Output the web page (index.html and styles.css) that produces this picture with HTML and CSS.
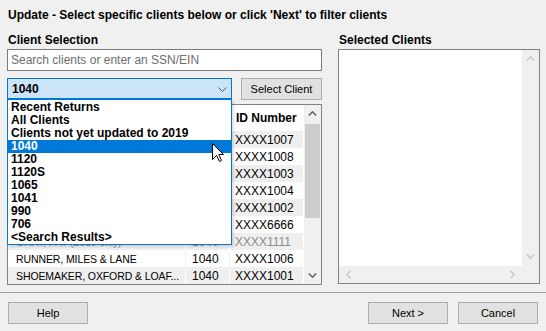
FILE: index.html
```html
<!DOCTYPE html>
<html>
<head>
<meta charset="utf-8">
<link rel="stylesheet" href="styles.css">
</head>
<body>
<div class="dlg">
  <div class="title">Update - Select specific clients below or click 'Next' to filter clients</div>
  <div class="main">
    <div class="left">
      <div class="label">Client Selection</div>
      <input class="search" type="text" placeholder="Search clients or enter an SSN/EIN">
      <div class="combo-row">
        <div class="combo">
          <span class="combo-val">1040</span>
          <svg class="chev" width="9" height="5" viewBox="0 0 9 5"><polyline points="0.5,0.5 4.5,4.5 8.5,0.5" fill="none" stroke="#555" stroke-width="1"/></svg>
        </div>
        <button class="btn btn-sel">Select Client</button>
      </div>
      <div class="grid">
        <div class="grid-body">
          <div class="row hdr"><div class="c name"></div><div class="c type"></div><div class="c id">ID Number</div></div>
          <div class="row alt"><div class="c name"></div><div class="c type"></div><div class="c id">XXXX1007</div></div>
          <div class="row"><div class="c name"></div><div class="c type"></div><div class="c id">XXXX1008</div></div>
          <div class="row alt"><div class="c name"></div><div class="c type"></div><div class="c id">XXXX1003</div></div>
          <div class="row"><div class="c name"></div><div class="c type"></div><div class="c id">XXXX1004</div></div>
          <div class="row alt"><div class="c name"></div><div class="c type"></div><div class="c id">XXXX1002</div></div>
          <div class="row"><div class="c name"></div><div class="c type"></div><div class="c id">XXXX6666</div></div>
          <div class="row alt dis"><div class="c name">GRAY, PAT (2019 only)</div><div class="c type">1040</div><div class="c id">XXXX1111</div></div>
          <div class="row"><div class="c name">RUNNER, MILES &amp; LANE</div><div class="c type">1040</div><div class="c id">XXXX1006</div></div>
          <div class="row alt"><div class="c name">SHOEMAKER, OXFORD &amp; LOAF...</div><div class="c type">1040</div><div class="c id">XXXX1001</div></div>
        </div>
        <div class="vscroll">
          <div class="sbtn"><svg width="9" height="5" viewBox="0 0 9 5"><polyline points="0.8,4.5 4.5,0.8 8.2,4.5" fill="none" stroke="#606060" stroke-width="1.5"/></svg></div>
          <div class="track"><div class="thumb"></div></div>
          <div class="sbtn"><svg width="9" height="5" viewBox="0 0 9 5"><polyline points="0.8,0.5 4.5,4.2 8.2,0.5" fill="none" stroke="#606060" stroke-width="1.5"/></svg></div>
        </div>
      </div>
      <div class="dropdown">
        <div class="item">Recent Returns</div>
        <div class="item">All Clients</div>
        <div class="item">Clients not yet updated to 2019</div>
        <div class="item sel">1040</div>
        <div class="item">1120</div>
        <div class="item">1120S</div>
        <div class="item">1065</div>
        <div class="item">1041</div>
        <div class="item">990</div>
        <div class="item">706</div>
        <div class="item">&lt;Search Results&gt;</div>
      </div>
    </div>
    <div class="right">
      <div class="label">Selected Clients</div>
      <div class="sel-list">
        <div class="sel-top">
          <div class="sel-area"></div>
          <div class="sel-vs">
            <svg width="9" height="5" viewBox="0 0 9 5"><polyline points="0.8,4.5 4.5,0.8 8.2,4.5" fill="none" stroke="#c4c4c4" stroke-width="1.3"/></svg>
            <svg width="9" height="5" viewBox="0 0 9 5"><polyline points="0.8,0.5 4.5,4.2 8.2,0.5" fill="none" stroke="#c4c4c4" stroke-width="1.3"/></svg>
          </div>
        </div>
        <div class="sel-hs">
          <div class="hs-bar">
            <svg width="5" height="9" viewBox="0 0 5 9"><polyline points="4.5,0.8 0.8,4.5 4.5,8.2" fill="none" stroke="#c4c4c4" stroke-width="1.3"/></svg>
            <svg width="5" height="9" viewBox="0 0 5 9"><polyline points="0.5,0.8 4.2,4.5 0.5,8.2" fill="none" stroke="#c4c4c4" stroke-width="1.3"/></svg>
          </div>
          <div class="corner"></div>
        </div>
      </div>
    </div>
  </div>
  <div class="sep"></div>
  <div class="footer">
    <button class="btn btn-foot">Help</button>
    <div class="spacer"></div>
    <button class="btn btn-foot">Next &gt;</button>
    <button class="btn btn-foot">Cancel</button>
  </div>
  <svg class="cursor" width="13" height="20" viewBox="0 0 13 20"><path d="M0.5,0.5 L0.5,16.5 L4.5,12.5 L7.5,18.5 L9.5,17.5 L6.8,11.5 L11.5,11.5 Z" fill="#fff" stroke="#000" stroke-width="1" stroke-linejoin="miter"/></svg>
</div>
</body>
</html>
```
FILE: styles.css
```css
html, body {
  margin: 0;
  padding: 0;
  background: #f0f0f0;
}
body {
  font-family: "Liberation Sans", Arial, sans-serif;
  font-size: 11px;
  color: #000;
}
.dlg {
  position: relative;
  width: 546px;
  height: 331px;
  overflow: hidden;
  display: flex;
  flex-direction: column;
}
.title {
  margin: 8px 0 0 8px;
  height: 14px;
  line-height: 14px;
  font-weight: bold;
  font-size: 12px;
  white-space: nowrap;
}
.main {
  display: flex;
  gap: 16px;
  margin: 11px 0 0 7px;
}
.left {
  position: relative;
  width: 315px;
  display: flex;
  flex-direction: column;
}
.right {
  width: 202px;
  display: flex;
  flex-direction: column;
}
.label {
  height: 14px;
  line-height: 14px;
  font-weight: bold;
  font-size: 12px;
  margin: 0 0 2px 1px;
  white-space: nowrap;
}
.search {
  box-sizing: border-box;
  width: 315px;
  height: 22px;
  margin: 0;
  border: 1px solid #7a7a7a;
  background: #fff;
  padding: 0 0 0 3px;
  font-family: "Liberation Sans", Arial, sans-serif;
  font-size: 12px;
  outline: none;
}
.search::placeholder {
  color: #6d6d6d;
  opacity: 1;
}
.combo-row {
  display: flex;
  gap: 9px;
  margin-top: 7px;
  height: 22px;
}
.combo {
  box-sizing: border-box;
  width: 225px;
  height: 21px;
  background: #cce4f7;
  border: 1px solid #0078d7;
  display: flex;
  align-items: center;
  padding: 0 4px 0 4px;
}
.combo-val {
  font-weight: bold;
  font-size: 12px;
}
.chev {
  margin-left: auto;
  margin-top: 1px;
}
.btn {
  box-sizing: border-box;
  height: 22px;
  background: #e1e1e1;
  border: 1px solid #adadad;
  font-family: "Liberation Sans", Arial, sans-serif;
  font-size: 11px;
  color: #000;
  padding: 0;
  margin: 0;
}
.btn-sel {
  width: 81px;
}
.grid {
  box-sizing: border-box;
  margin-top: 4px;
  height: 181px;
  border: 1px solid #828282;
  display: flex;
  background: #f0f0f0;
}
.grid-body {
  width: 296px;
  display: flex;
  flex-direction: column;
}
.row {
  display: flex;
  height: 17px;
  background: #fff;
}
.row.hdr {
  height: 26px;
  background: #fff;
  font-weight: bold;
  font-size: 12px;
}
.row.alt {
  background: #efefef;
}
.c {
  box-sizing: border-box;
  display: flex;
  align-items: center;
  white-space: nowrap;
  overflow: hidden;
  border-right: 1px solid #f0f0f0;
}
.row.alt .c {
  border-right: 1px solid #fff;
}
.row.hdr .c {
  border-right: 1px solid #fff;
}
.name {
  width: 178px;
  padding-left: 8px;
  font-size: 10.5px;
  letter-spacing: -0.1px;
}
.type {
  width: 44px;
  padding-left: 6px;
  font-size: 12px;
}
.id {
  width: 74px;
  padding-left: 5px;
  font-size: 12px;
  border-right: none;
}
.row.hdr .id {
  padding-left: 6px;
  font-size: 12px;
}
.row.dis {
  color: #8c8c8c;
}
.vscroll {
  width: 17px;
  display: flex;
  flex-direction: column;
  background: #f0f0f0;
}
.sbtn {
  height: 17px;
  display: flex;
  align-items: center;
  justify-content: center;
}
.track {
  flex: 1;
  padding: 2px 1px 0 1px;
}
.thumb {
  height: 94px;
  background: #cdcdcd;
}
.dropdown {
  position: absolute;
  left: 0;
  top: 66px;
  box-sizing: border-box;
  width: 225px;
  height: 146px;
  background: #fff;
  border: 1px solid #0078d7;
  padding-top: 1px;
  box-shadow: 2px 2px 2px rgba(0, 0, 0, 0.12);
}
.item {
  height: 13px;
  line-height: 13px;
  padding-left: 3px;
  font-weight: bold;
  font-size: 12px;
  white-space: nowrap;
}
.item.sel {
  background: #0078d7;
  color: #fff;
}
.sel-list {
  box-sizing: border-box;
  height: 235px;
  border: 1px solid #828282;
  display: flex;
  flex-direction: column;
  background: #fff;
}
.sel-top {
  flex: 1;
  display: flex;
}
.sel-area {
  flex: 1;
  background: #fff;
}
.sel-vs {
  width: 17px;
  background: #f0f0f0;
  display: flex;
  flex-direction: column;
  align-items: center;
  justify-content: space-between;
  padding: 6px 0 7px 0;
  box-sizing: border-box;
}
.sel-hs {
  height: 17px;
  display: flex;
}
.hs-bar {
  flex: 1;
  background: #f0f0f0;
  display: flex;
  align-items: center;
  justify-content: space-between;
  padding: 0 7px 0 7px;
}
.corner {
  width: 17px;
  background: #f0f0f0;
}
.sep {
  margin-top: 7px;
  height: 1px;
  background: #a0a0a0;
}
.footer {
  display: flex;
  gap: 10px;
  margin-top: 9px;
  padding: 0 8px;
}
.spacer {
  flex: 1;
}
.btn-foot {
  width: 80px;
}
.cursor {
  position: absolute;
  left: 212px;
  top: 143px;
}
```
